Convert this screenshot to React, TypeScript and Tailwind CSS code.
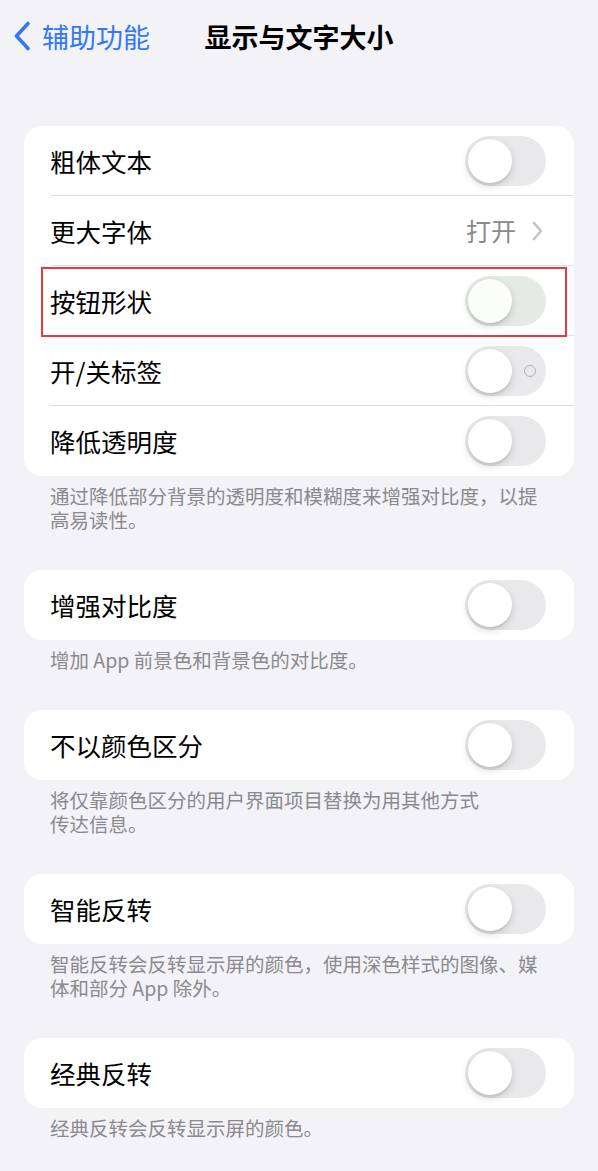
import React from "react";

function Toggle({ tint, labels }: { tint?: boolean; labels?: boolean }) {
  return (
    <div
      className={`relative flex h-[50px] w-[81px] shrink-0 items-center rounded-full px-[3px] ${
        tint ? "bg-[#e4ebe5]" : "bg-[#e9e9eb]"
      }`}
    >
      <div
        className={`h-[44px] w-[44px] rounded-full shadow-[0_3px_8px_rgba(0,0,0,0.15),0_3px_1px_rgba(0,0,0,0.06)] ${
          tint ? "bg-[#fbfdfb]" : "bg-white"
        }`}
      />
      {labels && (
        <div className="ml-[12px] h-[12px] w-[12px] rounded-full border-[1.5px] border-[#b3b3b7]" />
      )}
    </div>
  );
}

function Row({
  label,
  last,
  children,
  highlight,
}: {
  label: string;
  last?: boolean;
  children: React.ReactNode;
  highlight?: boolean;
}) {
  return (
    <div className="relative flex h-[70px] items-center pl-[26px]">
      <div
        className={`flex h-full flex-1 items-center justify-between pr-[28px] ${
          last ? "" : "border-b border-[#dedee2]"
        }`}
      >
        <span className="text-[25.5px] leading-none text-black">{label}</span>
        {children}
      </div>
      {highlight && (
        <div className="pointer-events-none absolute bottom-[-1px] left-[17px] right-[7px] top-[1px] border-[2.5px] border-[#e63a3e]" />
      )}
    </div>
  );
}

function Card({ children }: { children: React.ReactNode }) {
  return <div className="rounded-[18px] bg-white">{children}</div>;
}

function Note({ lines }: { lines: string[] }) {
  return (
    <div className="mb-[38px] px-[26px] pt-[8px] text-[19.5px] leading-[24px] text-[#8a8a8e]">
      {lines.map((l, i) => (
        <div key={i} className="h-[24px] whitespace-nowrap">
          {l}
        </div>
      ))}
    </div>
  );
}

export default function App() {
  return (
    <div
      className="min-h-[1171px] w-full bg-[#f2f2f7]"
      style={{ fontFamily: '"Noto Sans CJK SC", "Noto Sans", sans-serif' }}
    >
      <div className="grid h-[72px] grid-cols-[1fr_auto_1fr] items-center">
        <div className="flex items-center pl-[13px] text-[#3478f6]">
          <svg width="18" height="30" viewBox="0 0 18 30" fill="none">
            <path
              d="M15 2.5 L3.5 15 L15 27.5"
              stroke="#3478f6"
              strokeWidth="3.6"
              strokeLinecap="round"
              strokeLinejoin="round"
            />
          </svg>
          <span className="ml-[11px] text-[27px] leading-none">辅助功能</span>
        </div>
        <div className="text-[27px] font-semibold leading-none text-black">显示与文字大小</div>
        <div />
      </div>

      <div className="mx-[24px] mt-[54px]">
        <Card>
          <Row label="粗体文本">
            <Toggle />
          </Row>
          <Row label="更大字体">
            <div className="flex items-center">
              <span className="text-[25px] leading-none text-[#8a8a8e]">打开</span>
              <svg className="ml-[16px] mr-[3px]" width="11" height="20" viewBox="0 0 11 20" fill="none">
                <path
                  d="M2 2 L9 10 L2 18"
                  stroke="#c4c4c7"
                  strokeWidth="2.6"
                  strokeLinecap="round"
                  strokeLinejoin="round"
                />
              </svg>
            </div>
          </Row>
          <Row label="按钮形状" highlight>
            <Toggle tint />
          </Row>
          <Row label="开/关标签">
            <Toggle labels />
          </Row>
          <Row label="降低透明度" last>
            <Toggle />
          </Row>
        </Card>
        <Note lines={["通过降低部分背景的透明度和模糊度来增强对比度，以提", "高易读性。"]} />

        <Card>
          <Row label="增强对比度" last>
            <Toggle />
          </Row>
        </Card>
        <Note lines={["增加 App 前景色和背景色的对比度。"]} />

        <Card>
          <Row label="不以颜色区分" last>
            <Toggle />
          </Row>
        </Card>
        <Note lines={["将仅靠颜色区分的用户界面项目替换为用其他方式", "传达信息。"]} />

        <Card>
          <Row label="智能反转" last>
            <Toggle />
          </Row>
        </Card>
        <Note lines={["智能反转会反转显示屏的颜色，使用深色样式的图像、媒", "体和部分 App 除外。"]} />

        <Card>
          <Row label="经典反转" last>
            <Toggle />
          </Row>
        </Card>
        <Note lines={["经典反转会反转显示屏的颜色。"]} />
      </div>
    </div>
  );
}
